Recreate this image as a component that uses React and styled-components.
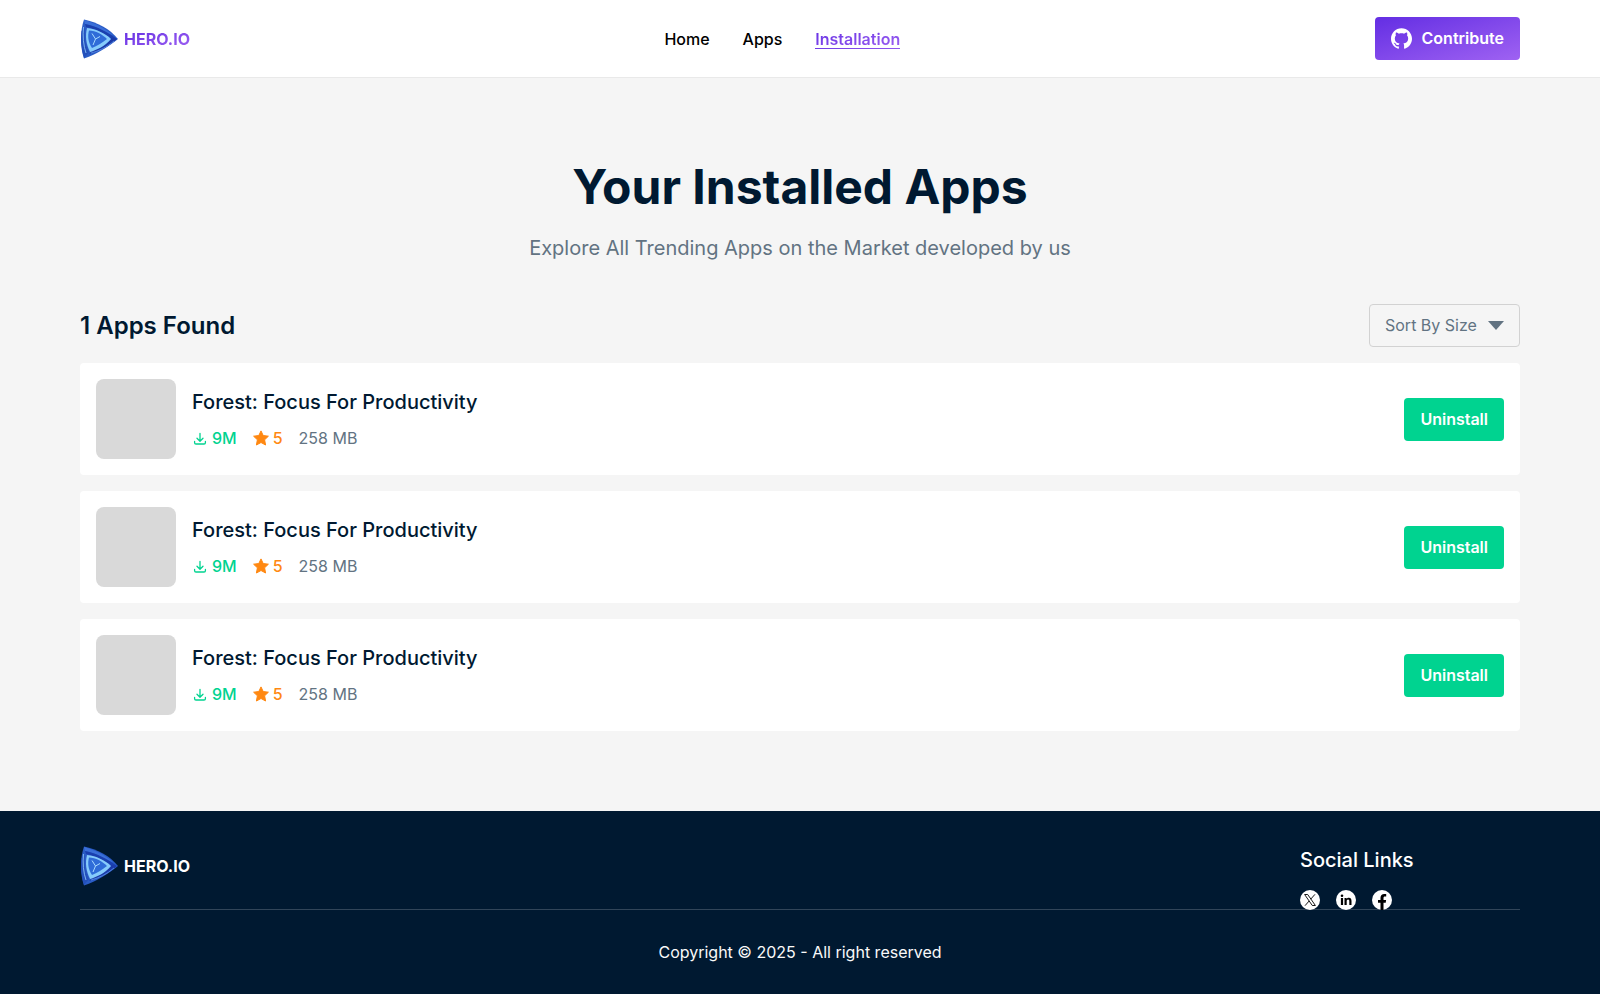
import React from "react";
import styled, { createGlobalStyle, css } from "styled-components";

const GlobalStyle = createGlobalStyle`
  *, *::before, *::after { box-sizing: border-box; }
  body {
    margin: 0;
    background: #f5f5f5;
    color: #001931;
    font-family: Inter, "Liberation Sans", sans-serif;
    font-size: 16px;
    line-height: 20px;
  }
  h1, h2, h3, p, ul { margin: 0; padding: 0; }
  ul { list-style: none; }
  a { color: inherit; text-decoration: none; }
  button, select { font: inherit; cursor: pointer; }
  svg { display: block; flex: none; }
`;

const gradient = "linear-gradient(to bottom right, #632ee3 0%, #9f62f2 100%)";

const gradientText = css`
  background: ${gradient};
  background-clip: text;
  -webkit-background-clip: text;
  color: transparent;
`;

const Header = styled.header`
  display: flex;
  align-items: center;
  justify-content: space-between;
  padding: 17px 80px;
  background: #fff;
  border-bottom: 1px solid #e9e9e9;
`;

const Brand = styled.a`
  display: flex;
  align-items: center;
  gap: 4px;
  font-weight: 700;
  color: #fff;
`;

const BrandName = styled.span`
  ${(p) => p.$gradient && gradientText}
`;

const NavList = styled.ul`
  display: flex;
  gap: 33px;
`;

const NavLink = styled.a`
  display: block;
  font-weight: 500;
  color: #000;
  ${(p) =>
    p.$active &&
    css`
      ${gradientText}
      font-weight: 600;
      position: relative;
      &::after {
        content: "";
        position: absolute;
        left: 0;
        right: 0;
        bottom: 0;
        height: 1px;
        background: ${gradient};
      }
    `}
`;

const Button = styled.button`
  display: flex;
  align-items: center;
  gap: 10px;
  height: 43px;
  padding: 0 16px 1px;
  border: 0;
  border-radius: 4px;
  font-weight: 600;
  color: #fff;
  background: ${(p) => (p.$primary ? gradient : "#00d390")};
`;

const Main = styled.main`
  padding: 80px;
`;

const Intro = styled.div`
  display: flex;
  flex-direction: column;
  gap: 16px;
  text-align: center;
  margin-bottom: 40px;
`;

const Title = styled.h1`
  font-size: 48px;
  line-height: 58px;
  font-weight: 700;
`;

const Subtitle = styled.p`
  font-size: 20px;
  line-height: 32px;
  color: #627382;
`;

const Toolbar = styled.div`
  display: flex;
  align-items: center;
  justify-content: space-between;
  margin-bottom: 16px;
`;

const Count = styled.h2`
  font-size: 24px;
  line-height: 32px;
  font-weight: 600;
`;

const SortBox = styled.label`
  display: grid;
  align-items: center;
  color: #627382;
  & > * { grid-area: 1 / 1; }
  & > svg { justify-self: end; margin-right: 16px; pointer-events: none; }
`;

const SortSelect = styled.select`
  appearance: none;
  height: 43px;
  padding: 0 42px 2px 15px;
  border: 1px solid #d2d2d2;
  border-radius: 4px;
  background: transparent;
  color: inherit;
`;

const AppList = styled.ul`
  display: flex;
  flex-direction: column;
  gap: 16px;
`;

const AppCard = styled.li`
  display: flex;
  align-items: center;
  gap: 16px;
  padding: 16px;
  background: #fff;
  border-radius: 4px;
`;

const Thumb = styled.div`
  width: 80px;
  height: 80px;
  border-radius: 8px;
  background: #d9d9d9;
`;

const AppInfo = styled.div`
  display: flex;
  flex: 1;
  flex-direction: column;
  gap: 14px;
`;

const AppName = styled.h3`
  font-size: 20px;
  line-height: 24px;
  font-weight: 500;
`;

const Stats = styled.div`
  display: flex;
  gap: 16px;
`;

const Stat = styled.span`
  display: flex;
  align-items: center;
  gap: 4px;
  font-weight: ${(p) => (p.$strong ? 500 : 400)};
  color: ${(p) => p.$color};
`;

const Footer = styled.footer`
  padding: 33px 80px 32px;
  background: #001931;
  color: #fff;
`;

const FooterTop = styled.div`
  display: flex;
  align-items: flex-start;
  justify-content: space-between;
  border-bottom: 1px solid #314559;
`;

const FooterBrand = styled.div`
  padding-top: 2px;
`;

const Social = styled.div`
  width: 220px;
  margin-bottom: -1px;
`;

const SocialTitle = styled.h3`
  font-size: 20px;
  line-height: 32px;
  font-weight: 500;
  margin-bottom: 14px;
`;

const SocialList = styled.ul`
  display: flex;
  gap: 16px;
`;

const Copyright = styled.p`
  padding-top: 32px;
  text-align: center;
  color: #fafafa;
`;

function Logo() {
  return (
    <svg width="40" height="40" viewBox="0 0 40 40" aria-hidden="true">
      <path d="M4 .5 C17 3 30 10 38 20 C28 28 17 35 4 39.5 C0 28 0 12 4 .5Z" fill="#2a5cc6" />
      <path d="M4 1 C15 4 25 9 33 16 L28 15 C21 10 12 6 5 5Z" fill="#3a6fd8" />
      <path d="M5 5 C16 7 28 13 37 20 L31 20 C23 13 15 10 6 8Z" fill="#1a3fae" />
      <path d="M1.500 12 C.5 21 1.500 31 4 39 L9 33 C5 26 4 17 5 9Z" fill="#2450bb" />
      <path d="M3.500 8 C2.500 17 3.500 27 6 34" fill="none" stroke="#7db6f2" strokeWidth="1" />
      <path d="M37 20 C28 28 19 32 9 35 L13 31 C20 30 27 25 32 19Z" fill="#1b3aa8" />
      <path d="M34 22 C27 28 19 32 11 34" fill="none" stroke="#5d93e8" strokeWidth=".8" />
      <path d="M7 9 C16 10 25 14 31 20 C25 27 17 31 10 33 C6 25 5 17 7 9Z" fill="#86cbfb" />
      <path d="M9 11.500 C16 12 22 15 27 20 C22 24 17 27 12 29 C8 23 7.500 17 9 11.500Z" fill="#2f6cd8" />
      <path d="M12 14.500 L15.500 20 L13 26 M15.500 20 L20 17.500" fill="none" stroke="#a9dbff" strokeWidth="1" />
    </svg>
  );
}

function GithubIcon() {
  return (
    <svg width="21" height="21" viewBox="0 0 24 24" fill="currentColor" aria-hidden="true">
      <path d="M12 .297c-6.63 0-12 5.373-12 12 0 5.303 3.438 9.8 8.205 11.385.6.113.82-.258.82-.577 0-.285-.01-1.04-.015-2.04-3.338.724-4.042-1.61-4.042-1.61C4.422 18.07 3.633 17.7 3.633 17.7c-1.087-.744.084-.729.084-.729 1.205.084 1.838 1.236 1.838 1.236 1.07 1.835 2.809 1.305 3.495.998.108-.776.417-1.305.76-1.605-2.665-.3-5.466-1.332-5.466-5.93 0-1.31.465-2.38 1.235-3.22-.135-.303-.54-1.523.105-3.176 0 0 1.005-.322 3.3 1.23.96-.267 1.98-.399 3-.405 1.02.006 2.04.138 3 .405 2.28-1.552 3.285-1.23 3.285-1.23.645 1.653.24 2.873.12 3.176.765.84 1.23 1.91 1.23 3.22 0 4.61-2.805 5.625-5.475 5.92.42.36.81 1.096.81 2.22 0 1.606-.015 2.896-.015 3.286 0 .315.21.69.825.57C20.565 22.092 24 17.592 24 12.297c0-6.627-5.373-12-12-12" />
    </svg>
  );
}

function DownloadIcon() {
  return (
    <svg width="16" height="16" viewBox="0 0 16 16" fill="none" stroke="currentColor" strokeWidth="1.3" strokeLinecap="round" strokeLinejoin="round" aria-hidden="true">
      <path d="M8 3.400V11M5 8.300L8 11.200L11 8.300M2.600 11.500V12.700Q2.600 14 4 14H12Q13.400 14 13.400 12.700V11.500" />
    </svg>
  );
}

function StarIcon() {
  return (
    <svg width="16" height="16" viewBox="0 0 16 16" fill="currentColor" stroke="currentColor" strokeWidth="1" strokeLinejoin="round" aria-hidden="true">
      <path d="M8 .9L10.2 5.5L15.4 6.2L11.6 9.8L12.6 15L8 12.5L3.4 15L4.4 9.8L.6 6.2L5.8 5.5Z" />
    </svg>
  );
}

function XIcon() {
  return (
    <svg width="20" height="20" viewBox="0 0 20 20" aria-hidden="true">
      <circle cx="10" cy="10" r="10" fill="#fff" />
      <path d="M4.6 4.5H7.7L15.4 15.5H12.3Z" fill="#fff" stroke="#000" strokeWidth=".9" />
      <path d="M15 4.3L10.7 9.2M9.2 10.9L5 15.7" stroke="#000" strokeWidth=".9" />
    </svg>
  );
}

function LinkedinIcon() {
  return (
    <svg width="20" height="20" viewBox="0 0 20 20" aria-hidden="true">
      <circle cx="10" cy="10" r="10" fill="#fff" />
      <circle cx="6" cy="5.8" r="1.3" />
      <path d="M4.9 8H7.1V15H4.9ZM8.5 8H10.6V9C11 8.2 11.9 7.8 12.9 7.8C15 7.8 15.5 9.2 15.5 11.1V15H13.3V11.5C13.3 10.5 13.2 9.6 12.1 9.6C11 9.6 10.7 10.5 10.7 11.5V15H8.5Z" />
    </svg>
  );
}

function FacebookIcon() {
  return (
    <svg width="20" height="20" viewBox="0 0 20 20" aria-hidden="true">
      <circle cx="10" cy="10" r="10" fill="#fff" />
      <path d="M8.5 19.9V12.8H6V10H8.5V7.8C8.5 5.3 10 3.9 12.2 3.9C13.3 3.9 14.2 4.1 14.2 4.1V6.5H13C11.8 6.5 11.5 7.2 11.5 8V10H14.1L13.7 12.8H11.5V19.9Z" />
    </svg>
  );
}

const navItems = ["Home", "Apps", "Installation"];

const apps = [1, 2, 3].map((id) => ({
  id,
  name: "Forest: Focus For Productivity",
  downloads: "9M",
  rating: 5,
  size: "258 MB",
}));

const socials = [
  { label: "X", Icon: XIcon },
  { label: "LinkedIn", Icon: LinkedinIcon },
  { label: "Facebook", Icon: FacebookIcon },
];

export default function App() {
  return (
    <>
      <GlobalStyle />
      <Header>
        <Brand href="#">
          <Logo />
          <BrandName $gradient>HERO.IO</BrandName>
        </Brand>
        <nav>
          <NavList>
            {navItems.map((item) => (
              <li key={item}>
                <NavLink href="#" $active={item === "Installation"}>{item}</NavLink>
              </li>
            ))}
          </NavList>
        </nav>
        <Button type="button" $primary>
          <GithubIcon />
          Contribute
        </Button>
      </Header>
      <Main>
        <Intro>
          <Title>Your Installed Apps</Title>
          <Subtitle>Explore All Trending Apps on the Market developed by us</Subtitle>
        </Intro>
        <Toolbar>
          <Count>1 Apps Found</Count>
          <SortBox>
            <SortSelect aria-label="Sort apps">
              <option>Sort By Size</option>
            </SortSelect>
            <svg width="16" height="9" viewBox="0 0 16 9" fill="currentColor" aria-hidden="true">
              <path d="M0 0H16L8 9Z" />
            </svg>
          </SortBox>
        </Toolbar>
        <AppList>
          {apps.map((app) => (
            <AppCard key={app.id}>
              <Thumb />
              <AppInfo>
                <AppName>{app.name}</AppName>
                <Stats>
                  <Stat $strong $color="#00d390"><DownloadIcon />{app.downloads}</Stat>
                  <Stat $strong $color="#ff8811"><StarIcon />{app.rating}</Stat>
                  <Stat $color="#627382">{app.size}</Stat>
                </Stats>
              </AppInfo>
              <Button type="button">Uninstall</Button>
            </AppCard>
          ))}
        </AppList>
      </Main>
      <Footer>
        <FooterTop>
          <FooterBrand>
            <Brand href="#">
              <Logo />
              <BrandName>HERO.IO</BrandName>
            </Brand>
          </FooterBrand>
          <Social>
            <SocialTitle>Social Links</SocialTitle>
            <SocialList>
              {socials.map(({ label, Icon }) => (
                <li key={label}>
                  <a href="#" aria-label={label}><Icon /></a>
                </li>
              ))}
            </SocialList>
          </Social>
        </FooterTop>
        <Copyright>Copyright © 2025 - All right reserved</Copyright>
      </Footer>
    </>
  );
}
